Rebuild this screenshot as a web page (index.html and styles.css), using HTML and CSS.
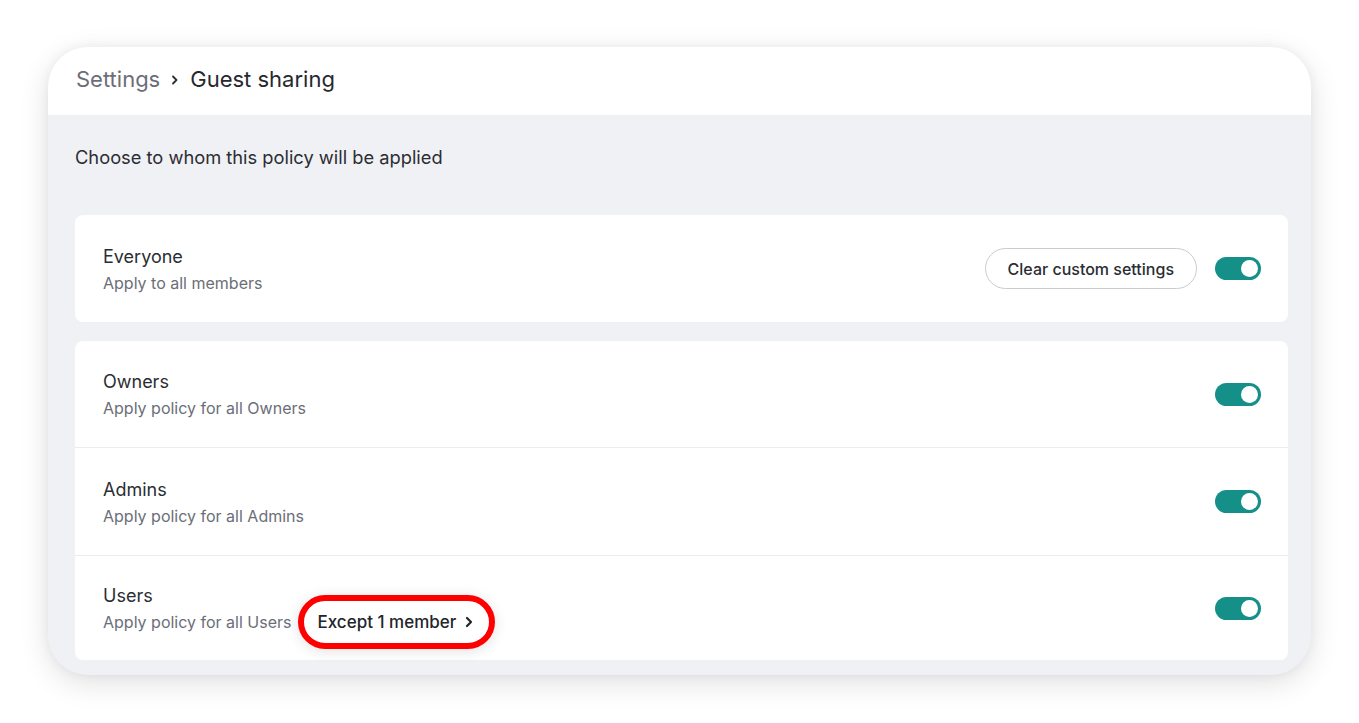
FILE: index.html
```html
<!DOCTYPE html>
<html>
<head>
<meta charset="utf-8">
<link rel="stylesheet" href="styles.css">
</head>
<body>
<div class="panel">
  <div class="header">
    <span class="crumb-muted">Settings</span>
    <svg class="crumb-sep" width="12" height="12" viewBox="0 0 12 12"><path d="M4 2.5 L7.5 6 L4 9.5" fill="none" stroke="#2b2d33" stroke-width="1.8" stroke-linecap="round" stroke-linejoin="round"/></svg>
    <span class="crumb-current">Guest sharing</span>
  </div>
  <div class="body">
    <p class="intro">Choose to whom this policy will be applied</p>
    <div class="card single">
      <div class="row">
        <div class="row-text">
          <div class="row-title">Everyone</div>
          <div class="row-sub">Apply to all members</div>
        </div>
        <div class="row-actions">
          <button class="btn-outline">Clear custom settings</button>
          <span class="toggle"><span class="knob"></span></span>
        </div>
      </div>
    </div>
    <div class="card group">
      <div class="row">
        <div class="row-text">
          <div class="row-title">Owners</div>
          <div class="row-sub">Apply policy for all Owners</div>
        </div>
        <div class="row-actions"><span class="toggle"><span class="knob"></span></span></div>
      </div>
      <div class="row">
        <div class="row-text">
          <div class="row-title">Admins</div>
          <div class="row-sub">Apply policy for all Admins</div>
        </div>
        <div class="row-actions"><span class="toggle"><span class="knob"></span></span></div>
      </div>
      <div class="row">
        <div class="row-text">
          <div class="row-title">Users</div>
          <div class="row-sub sub-flex">Apply policy for all Users
            <span class="except">Except 1 member
              <svg width="10" height="12" viewBox="0 0 10 12"><path d="M3 2 L7 6 L3 10" fill="none" stroke="#23252b" stroke-width="2.2" stroke-linecap="round" stroke-linejoin="round"/></svg>
            </span>
          </div>
        </div>
        <div class="row-actions"><span class="toggle"><span class="knob"></span></span></div>
      </div>
    </div>
  </div>
</div>
</body>
</html>
```
FILE: styles.css
```css
* { box-sizing: border-box; }
html, body { margin: 0; padding: 0; background: #ffffff; }
body {
  font-family: Inter, "Noto Sans", "Liberation Sans", sans-serif;
  width: 1359px;
  height: 723px;
  overflow: hidden;
  padding: 47px 0 0 48px;
}
.panel {
  width: 1263px;
  height: 628px;
  border-radius: 40px;
  background: #f0f1f5;
  overflow: hidden;
  box-shadow: 0 8px 30px rgba(0,0,0,0.12), 0 0 12px rgba(0,0,0,0.05);
}
.header {
  height: 68px;
  background: #ffffff;
  display: flex;
  align-items: center;
  padding: 0 0 4px 28px;
  gap: 9px;
  font-size: 22px;
}
.crumb-muted { color: #6b6e78; }
.crumb-current { color: #26282e; }
.crumb-sep { margin-top: 1px; }
.body {
  padding: 0 23px 0 27px;
}
.intro {
  margin: 0;
  padding-top: 31px;
  height: 100px;
  font-size: 18.3px;
  color: #2b2d33;
}
.card {
  background: #ffffff;
  border-radius: 8px;
}
.card.single { height: 107px; margin-bottom: 19px; }
.card.single .row { height: 107px; }
.card.group .row { border-bottom: 1px solid #ebecef; }
.card.group .row:nth-child(1) { height: 107px; }
.card.group .row:nth-child(2) { height: 108px; }
.card.group .row:last-child { border-bottom: none; height: 104px; }
.row {
  display: flex;
  align-items: center;
  justify-content: space-between;
  padding: 0 27px 0 28px;
}
.row-text { display: flex; flex-direction: column; gap: 6px; padding-top: 1px; }
.row-title { font-size: 18px; color: #2b2d33; }
.row-sub { font-size: 16px; color: #6b6e78; }
.sub-flex { display: flex; align-items: center; gap: 6px; }
.except {
  display: inline-flex;
  align-items: center;
  gap: 8px;
  height: 54px;
  margin: -19px 0;
  padding: 0 15px 0 14px;
  border: 6px solid #ff0000;
  border-radius: 30px;
  background: #ffffff;
  color: #23252b;
  font-size: 17px;
  font-weight: 500;
  box-shadow: 0 2px 14px rgba(0,0,0,0.12);
}
.row-actions { display: flex; align-items: center; gap: 18px; }
.btn-outline {
  font-family: inherit;
  height: 41px;
  padding: 0 22px;
  border: 1px solid #c9cbd1;
  border-radius: 21px;
  background: #ffffff;
  color: #2b2d33;
  font-size: 16px;
  font-weight: 500;
}
.toggle {
  width: 46px;
  height: 23px;
  border-radius: 12px;
  background: #149088;
  display: flex;
  align-items: center;
  justify-content: flex-end;
  padding-right: 3px;
}
.knob {
  width: 17px;
  height: 17px;
  border-radius: 50%;
  background: #ffffff;
}
```
